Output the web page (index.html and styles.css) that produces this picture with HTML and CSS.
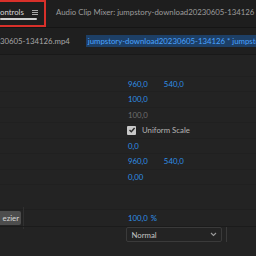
FILE: index.html
```html
<!DOCTYPE html>
<html>
<head>
<meta charset="utf-8">
<link rel="stylesheet" href="styles.css">
</head>
<body>
<div class="app">
  <div class="tabbar">
    <div class="tab active">
      <span class="tab-label">ontrols</span>
      <svg class="menu-icon" width="6" height="5" viewBox="0 0 6 5" shape-rendering="crispEdges"><path d="M0 0.5H6M0 2.5H6M0 4.5H6" stroke="#a8a8a8" stroke-width="1"/></svg>
    </div>
    <div class="tab">Audio Clip Mixer: jumpstory-download20230605-134126</div>
  </div>
  <div class="clipbar">
    <span class="src">30605-134126.mp4</span>
    <svg class="chev" width="7" height="5" viewBox="0 0 7 5"><path d="M1 1L3.5 3.5L6 1" stroke="#9a9a9a" stroke-width="1.1" fill="none"/></svg>
    <span class="seq">jumpstory-download20230605-134126 * jumpstory</span>
  </div>
  <div class="props">
    <div class="row"></div>
    <div class="row"><span class="v">960,0</span><span class="v">540,0</span></div>
    <div class="row"><span class="v">100,0</span></div>
    <div class="row"><span class="v dim">100,0</span></div>
    <div class="row"><span class="check"><svg width="8" height="8" viewBox="0 0 8 8"><path d="M1.5 4L3.3 5.8L6.6 2" stroke="#2a2a2a" stroke-width="1.4" fill="none"/></svg></span><span class="lbl">Uniform Scale</span></div>
    <div class="row"><span class="v">0,0</span></div>
    <div class="row"><span class="v">960,0</span><span class="v">540,0</span></div>
    <div class="row"><span class="v">0,00</span></div>
  </div>
  <div class="opacity">
    <div class="orow">
      <div class="left"><span class="btn">ezier</span><span class="divider"></span></div>
      <span class="v">100,0 <span class="pct">%</span></span>
    </div>
    <div class="orow second">
      <div class="left"></div>
      <div class="dropdown"><span>Normal</span><svg width="7" height="5" viewBox="0 0 7 5"><path d="M1 1L3.5 3.5L6 1" stroke="#9a9a9a" stroke-width="1.1" fill="none"/></svg></div>
      <div class="dropdown2"></div>
    </div>
  </div>
</div>
</body>
</html>
```

FILE: styles.css
```css
* { box-sizing: border-box; }
html, body { margin: 0; padding: 0; }
body {
  width: 256px; height: 256px; overflow: hidden;
  background: #232323;
  font-family: "Lato", "Liberation Sans", sans-serif;
  font-size: 7.8px;
  color: #a9a9a9;
}
.app { width: 256px; height: 256px; display: flex; flex-direction: column; }
.tabbar {
  height: 28px; flex: none;
  display: flex; align-items: stretch;
  background: #1e1e1e;
  border-bottom: 1px solid #151515;
}
.tab { display: flex; align-items: center; white-space: nowrap; color: #9c9c9c; padding-left: 10px; padding-bottom: 3px; }
.tab.active {
  position: relative;
  width: 46px; padding-left: 0;
  border: 2px solid #d8302a; border-left: none;
  color: #d6d6d6;
}
.tab.active::after {
  content: ""; position: absolute; left: 0; right: 7px; bottom: 5px; height: 2px; background: #d0d0d0; border-radius: 1px;
}
.menu-icon { margin-left: 8px; }
.clipbar {
  height: 27px; flex: none;
  display: flex; align-items: center; white-space: nowrap;
  background: #1f1f1f;
  border-bottom: 1px solid #191919;
  color: #a6a6a6;
}
.chev { margin-left: 11px; margin-right: 5px; }
.seq { color: #4aa3ff; background: #1d3f66; padding: 1px 2px; }
.props { display: flex; flex-direction: column; padding-top: 6px; }
.row {
  height: 15.5px; display: flex; align-items: center;
  padding-left: 128px; gap: 16px;
  border-bottom: 1px solid #202020;
}
.v { color: #2f8fe6; }
.v.dim { color: #6e6e6e; }
.pct { margin-left: 1px; }
.check {
  width: 9px; height: 9px; background: #c8c8c8; border-radius: 1px;
  display: flex; align-items: center; justify-content: center; margin-left: -1px; margin-right: -10px;
}
.lbl { color: #b4b4b4; }
.opacity { margin-top: 24px; display: flex; flex-direction: column; border-top: 1px solid #1f1f1f; }
.orow { height: 16px; display: flex; align-items: center; }
.orow.second { height: 16px; border-top: 1px solid #1b1b1b; }
.left { width: 128px; display: flex; align-items: center; height: 100%; }
.btn {
  background: #4d4d4d; color: #d8d8d8; height: 14px; width: 21px;
  display: flex; align-items: center; justify-content: flex-end; padding-right: 2px; border-radius: 0 2px 2px 0;
}
.divider { width: 1px; height: 22px; background: #303030; margin-left: 2px; }
.dropdown {
  width: 97px; height: 15px; border: 1px solid #3a3a3a; border-radius: 2px;
  display: flex; align-items: center; justify-content: space-between; padding: 0 4px 0 4px; color: #c4c4c4;
}
.dropdown2 { width: 30px; height: 15px; border-left: 1px solid #3a3a3a; margin-left: 4px; }
```
